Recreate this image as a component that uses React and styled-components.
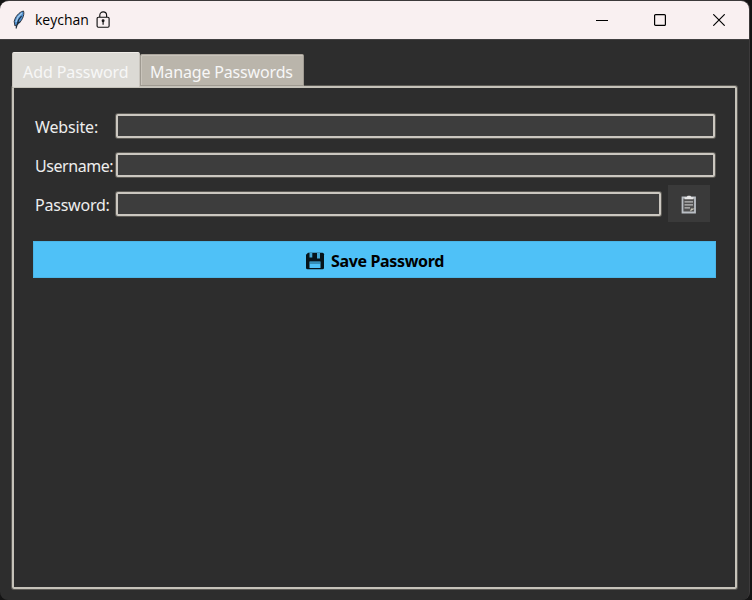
import React from "react";
import styled, { createGlobalStyle } from "styled-components";

const Global = createGlobalStyle`
  * { box-sizing: border-box; }
  body { margin: 0; background: #141414; font-family: "Noto Sans", "Open Sans", sans-serif; overflow: hidden; }
`;
const Window = styled.main`
  width: 750px; height: 600px; background: #2d2d2d;
  border: solid #3c3a3b; border-width: 1px 1px 0 0;
  border-radius: 9px 9px 8px 8px; overflow: hidden;
  display: flex; flex-direction: column;
`;
const TitleBar = styled.header`
  height: 38px; flex: none; background: #f9f0f1; color: #000;
  display: flex; align-items: center; padding-left: 12px;
`;
const Title = styled.span`
  font: 14px/20px "Open Sans", sans-serif; letter-spacing: ${p => p.$spacing}px;
  width: 61px; margin-left: 9px; white-space: nowrap;
`;
const Controls = styled.div`
  margin-left: auto; display: flex; padding-right: 1px;
`;
const Control = styled.button`
  width: 58.5px; height: 38px; padding: 0; border: 0; background: none;
  display: grid; place-items: center;
`;
const Notebook = styled.section`
  flex: 1; display: flex; flex-direction: column; padding: 13px 12px 11px 12px;
  border-top: 1px solid #424041;
`;
const Tabs = styled.nav`
  display: flex; align-items: flex-end; height: 33px;
`;
const Tab = styled.button`
  width: ${p => p.$width}px; height: ${p => (p.$active ? 35 : 32)}px;
  margin-bottom: ${p => (p.$active ? -1 : 0)}px;
  z-index: ${p => (p.$active ? 1 : 0)};
  padding: ${p => (p.$active ? 4 : 3)}px 0 0 ${p => (p.$active ? 10 : 9)}px;
  display: flex; align-items: center;
  border: 1px solid ${p => (p.$active ? "#c9c5be" : "#9f9a91")};
  border-top-color: ${p => (p.$active ? "#eeebe7" : "#a9a39a")};
  border-bottom-width: ${p => (p.$active ? 0 : 1)}px;
  border-radius: 2px 2px 0 0;
  background: ${p => (p.$active ? "#dcdad5" : "#bab5ab")};
  box-shadow: ${p => (p.$active ? "none" : "inset 1px 1px #c9c4bb")};
  color: #f7f7f7; text-align: left; white-space: nowrap;
  font: 16px/24px "Noto Sans", sans-serif; letter-spacing: ${p => p.$spacing}px;
`;
const Panel = styled.div`
  flex: 1; border: 2px solid #c5c2b9; border-radius: 2px;
  box-shadow: 0 0 0 1px #5c5a55;
  padding: 20px 19px 0; display: flex; flex-direction: column;
`;
const Field = styled.label`
  display: flex; align-items: center; height: ${p => p.$height || 36}px;
`;
const Label = styled.span`
  width: 83px; padding: 1px 0 0 2px; flex: none; color: #eee; white-space: nowrap;
  font: 16px/22px "Noto Sans", sans-serif; letter-spacing: ${p => p.$spacing}px;
`;
const Input = styled.input`
  flex: 1; min-width: 0; height: 24px; margin-right: 1px; padding: 0 5px; outline: 0;
  color: #eee; background: #3d3d3d; border: 2px solid #cbc7c0;
  border-radius: 2px; box-shadow: 0 0 0 1px #5c5a55;
`;
const CopyButton = styled.button`
  width: 42px; height: 37px; margin: -1px 6px 0 6px; padding: 2px 0 0;
  background: #3a3a3a; border: 0; display: grid; place-items: center;
`;
const SaveButton = styled.button`
  height: 37px; margin-top: 19px; padding: 3px 0 0; background: #4fc1f7; border: 1px solid #4ab5e7;
  color: #000; display: flex; align-items: center; justify-content: center; gap: 6px;
  font: 700 16px/22px "Noto Sans", sans-serif; letter-spacing: -0.34px;
`;

const Feather = () => (
  <svg width="14" height="20" viewBox="0 0 14 20">
    <path d="M11.5 1C7 2 3 7 2.2 11.5L3 16l2-1C9.5 12 13 5 11.5 1Z" fill="#4d8ed0" stroke="#303640" />
    <path d="M10 3 6 7l-2 5" fill="none" stroke="#a8cdea" strokeWidth="1.3" />
    <path d="M9.5 6 6.5 10 4 18.5M5 13l3-1" fill="none" stroke="#1c2a38" strokeWidth="1.1" />
  </svg>
);
const Lock = () => (
  <svg width="15" height="18" viewBox="0 0 15 18" fill="none" stroke="#111" strokeWidth="1.15">
    <rect x="1.1" y="6.2" width="12" height="10" rx="1.2" />
    <path d="M3.8 6V4.2a3.4 3.4 0 0 1 6.8 0V6M7.1 10.5v3.2" />
    <circle cx="7.1" cy="9.8" r=".9" fill="#111" />
  </svg>
);
const Clipboard = () => (
  <svg width="16" height="19" viewBox="0 0 16 19">
    <path d="M1.5 2.5h12.5v15H1.5z" fill="#505050" stroke="#b9bec4" strokeWidth="1.8" />
    <path d="M3.5 2.2h2L6.7.8h2.6l1.2 1.4h2v2h-9z" fill="#e6e6e6" />
    <path d="M3.5 6.8h8.5M3.5 9.8h8.5M3.5 12.8H9" stroke="#bdbdbd" strokeWidth="1.3" />
    <path d="m9 16.5 1-3h4Z" fill="#c9c6b8" />
  </svg>
);
const Floppy = () => (
  <svg width="20" height="18" viewBox="0 0 20 18">
    <path d="M3 .8h14.5q1.5 0 1.5 1.5v13.4q0 1.5-1.5 1.5h-15q-1.5 0-1.5-1.5V2.8Z" fill="#06141b" />
    <path d="M4.5 1h2.8v4.5H4.5zm7.5 0h3v5.5h-3z" fill="#43a7d5" />
    <path d="M4.5 9.5h11V16h-11z" fill="#4fc1f7" />
    <path d="M4.5 11h11" stroke="#1d5975" />
  </svg>
);

export default function App() {
  return (
    <>
      <Global />
      <Window>
        <TitleBar>
          <Feather />
          <Title $spacing={0}>keychan</Title>
          <Lock />
          <Controls>
            <Control aria-label="Minimize">
              <svg width="12" height="12"><path d="M0 6.5h12" stroke="#000" /></svg>
            </Control>
            <Control aria-label="Maximize">
              <svg width="12" height="12"><rect x=".6" y=".6" width="10.8" height="10.8" rx="1" fill="none" stroke="#000" strokeWidth="1.2" /></svg>
            </Control>
            <Control aria-label="Close">
              <svg width="12" height="12"><path d="m.3.3 11.4 11.4m0-11.4L.3 11.7" stroke="#000" strokeWidth="1.15" /></svg>
            </Control>
          </Controls>
        </TitleBar>
        <Notebook>
          <Tabs>
            <Tab $active $width={128} $spacing={-0.08}>Add Password</Tab>
            <Tab $width={164} $spacing={-0.16}>Manage Passwords</Tab>
          </Tabs>
          <Panel>
            <Field><Label $spacing={-0.15}>Website:</Label><Input /></Field>
            <Field $height={42}><Label $spacing={-0.45}>Username:</Label><Input /></Field>
            <Field>
              <Label $spacing={-0.22}>Password:</Label><Input type="password" />
              <CopyButton type="button" aria-label="Copy password"><Clipboard /></CopyButton>
            </Field>
            <SaveButton type="button"><Floppy />Save Password</SaveButton>
          </Panel>
        </Notebook>
      </Window>
    </>
  );
}
